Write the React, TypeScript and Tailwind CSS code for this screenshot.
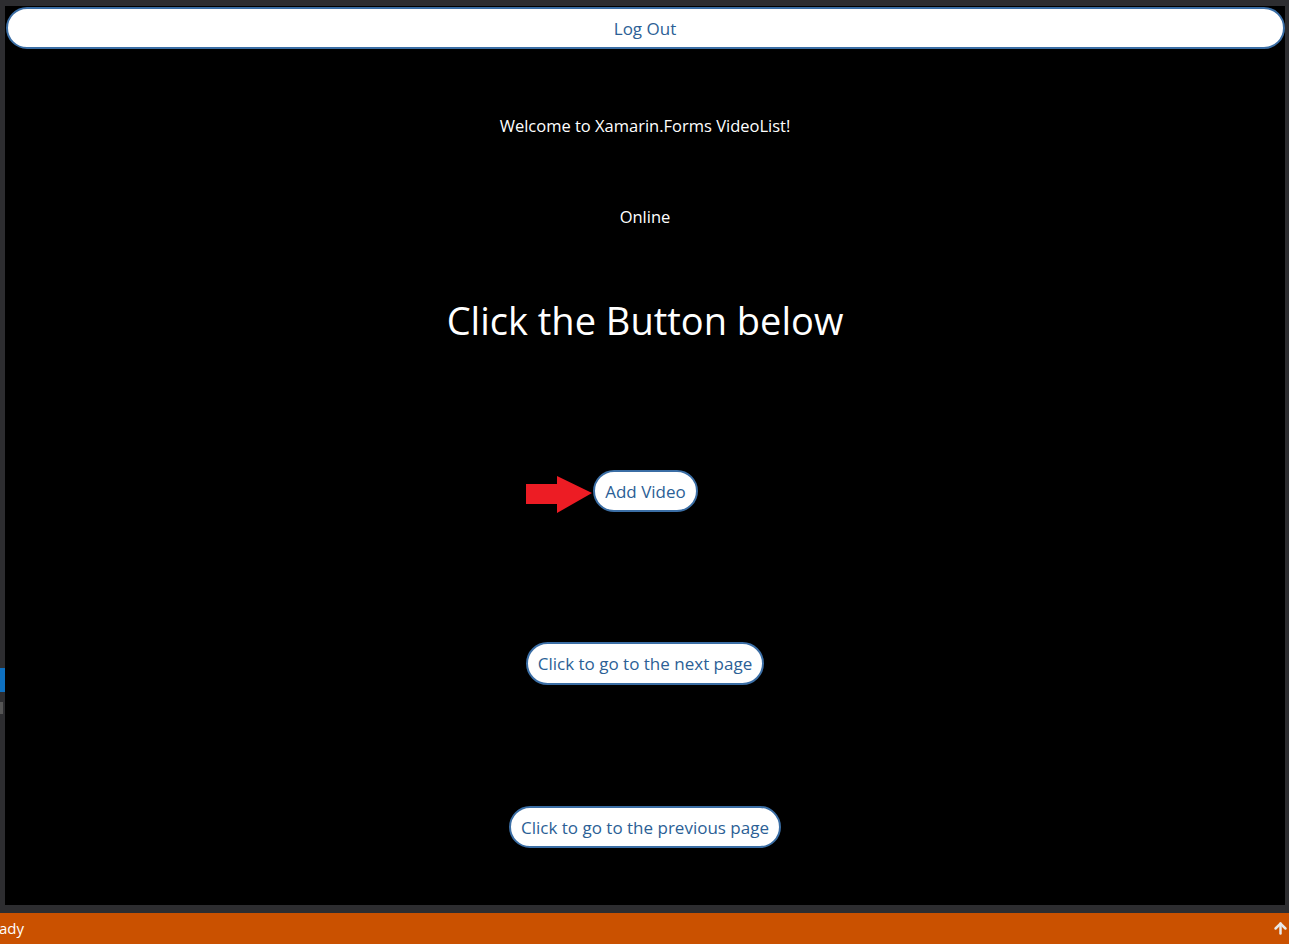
import { ArrowUp } from 'lucide-react';

const pill =
  'rounded-full border-2 border-[#3b6ea5] bg-white text-[#2c5f96] leading-none flex items-center justify-center';

function RedArrow() {
  return (
    <svg width="67" height="38" viewBox="0 0 67 38" className="shrink-0 translate-y-[4px]">
      <path d="M0 8 H31 V0 L66 17 L31 37 V28 H0 Z" fill="#ed1c24" />
    </svg>
  );
}

export default function App() {
  return (
    <div
      className="w-[1289px] h-[944px] bg-[#2d2d30] flex flex-col overflow-hidden"
      style={{ fontFamily: '"Open Sans", "Noto Sans", sans-serif' }}
    >
      <div className="h-[6px] shrink-0" />
      <div className="flex flex-1 min-h-0">
        {/* left gutter with bits of the window behind */}
        <div className="w-[5px] shrink-0 flex flex-col">
          <div className="h-[662px]" />
          <div className="h-[24px] bg-[#0e70c0]" />
          <div className="h-[10px]" />
          <div className="h-[12px] w-[3px] bg-[#555]" />
        </div>
        <main className="flex-1 bg-black flex flex-col items-center">
          <button className={`${pill} mt-[1px] w-[1279px] h-[42px] text-[17px]`}>Log Out</button>
          <p className="mt-[65px] text-white text-[16.5px] leading-[24px]">Welcome to Xamarin.Forms VideoList!</p>
          <p className="mt-[67px] text-white text-[16.5px] leading-[24px]">Online</p>
          <h1 className="mt-[67px] text-white text-[38px] leading-[48px]">Click the Button below</h1>
          <div className="mt-[126px] flex items-center ml-[-66px]">
            <RedArrow />
            <button className={`${pill} h-[42px] px-[10px] text-[17px]`}>Add Video</button>
          </div>
          <button className={`${pill} mt-[130px] h-[43px] px-[10px] text-[17px]`}>Click to go to the next page</button>
          <button className={`${pill} mt-[121px] h-[42px] px-[10px] text-[17px]`}>Click to go to the previous page</button>
        </main>
        <div className="w-[4px] shrink-0" />
      </div>
      <div className="h-[8px] shrink-0" />
      <footer className="h-[31px] shrink-0 bg-[#ca5100] flex items-center justify-between text-white text-[15px]">
        <span className="ml-[-1px]">ady</span>
        <ArrowUp size={17} strokeWidth={3.5} className="text-[#e8e8e8]" />
      </footer>
    </div>
  );
}
